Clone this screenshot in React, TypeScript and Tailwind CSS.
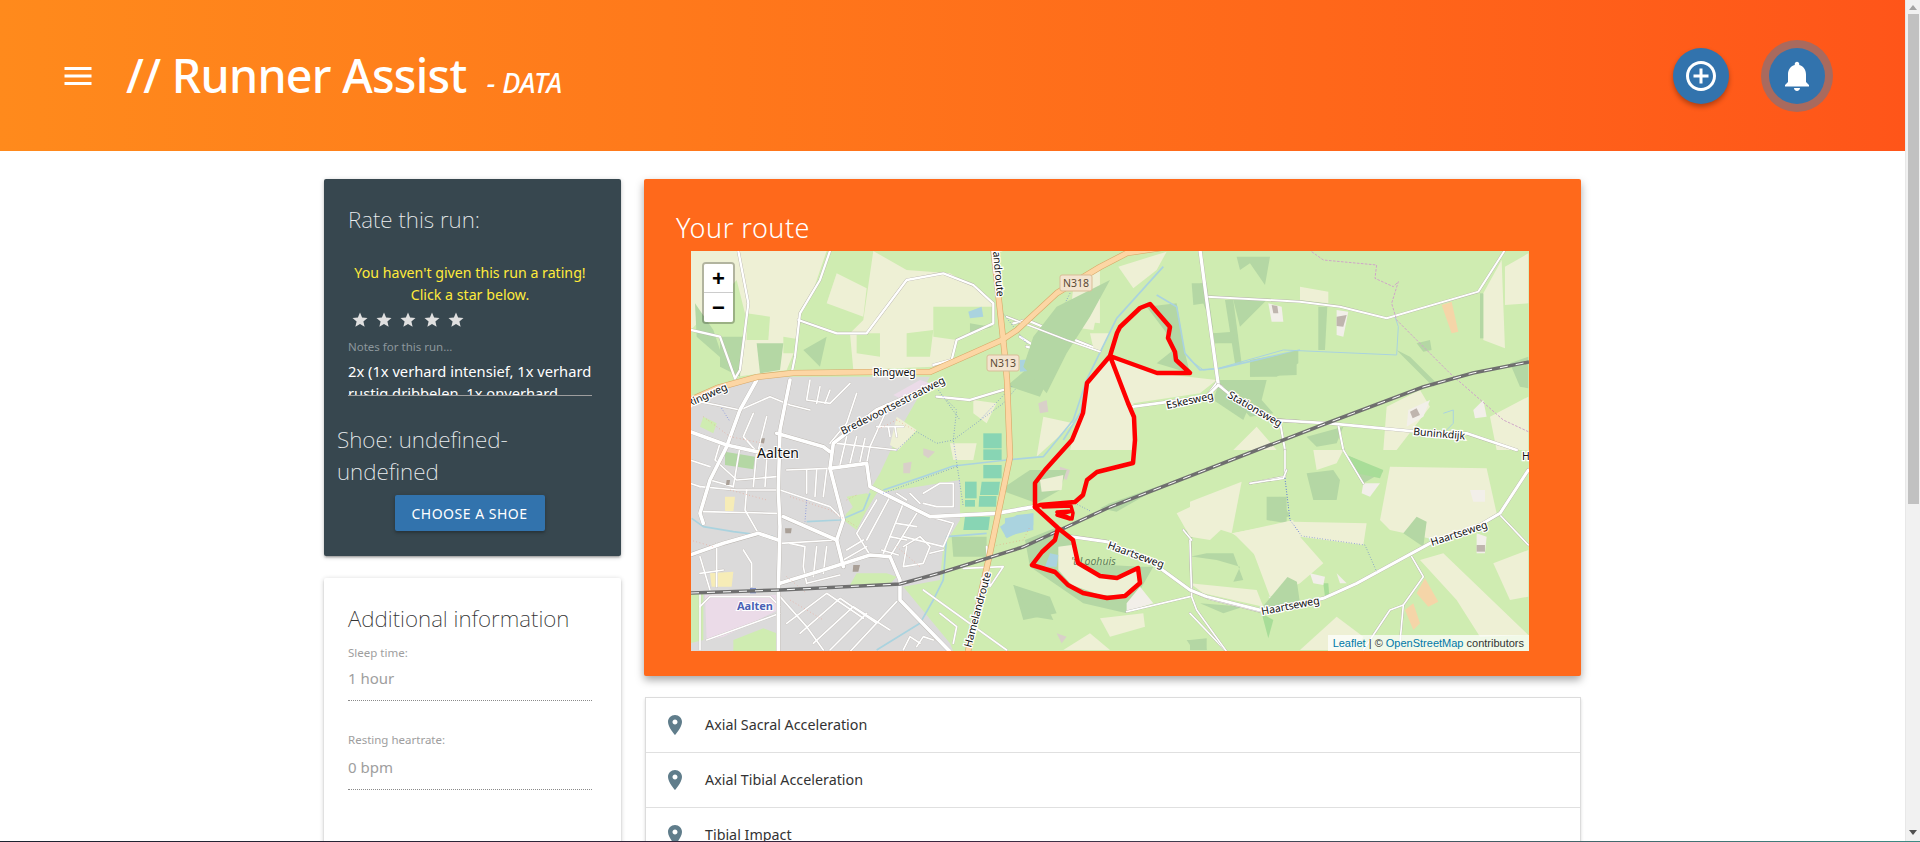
import React from 'react';

const MENU = 'M3 18h18v-2H3v2zm0-5h18v-2H3v2zm0-7v2h18V6H3z';
const ADD =
  'M13 7h-2v4H7v2h4v4h2v-4h4v-2h-4V7zm-1-5C6.48 2 2 6.48 2 12s4.48 10 10 10 10-4.48 10-10S17.52 2 12 2zm0 18c-4.41 0-8-3.59-8-8s3.59-8 8-8 8 3.59 8 8-3.59 8-8 8z';
const BELL =
  'M12 22c1.1 0 2-.9 2-2h-4c0 1.1.89 2 2 2zm6-6v-5c0-3.07-1.64-5.64-4.5-6.32V4c0-.83-.67-1.5-1.5-1.5s-1.5.67-1.5 1.5v.68C7.63 5.36 6 7.92 6 11v5l-2 2v1h16v-1l-2-2z';
const STAR = 'M12 17.27L18.18 21l-1.64-7.03L22 9.24l-7.19-.61L12 2 9.19 8.63 2 9.24l5.46 4.73L5.82 21z';
const PIN =
  'M12 2C8.13 2 5 5.13 5 9c0 5.25 7 13 7 13s7-7.75 7-13c0-3.87-3.13-7-7-7zm0 9.5c-1.38 0-2.5-1.12-2.5-2.5s1.12-2.5 2.5-2.5 2.5 1.12 2.5 2.5-1.12 2.5-2.5 2.5z';

const WOOD = '#b4d7a4';
const RAIL = '0,342 89,339 209,333 249,322 332,296 419,256 566,199 639,171 732,136 782,122 838,111';

const Icon: React.FC<{ d: string; className: string }> = ({ d, className }) => (
  <svg viewBox="0 0 24 24" fill="currentColor" className={className}>
    <path d={d} />
  </svg>
);

const Roads: React.FC<{ lines: string[]; w: number; casing?: string; fill?: string; edge?: number }> = ({
  lines,
  w,
  casing = '#b5b0aa',
  fill = '#ffffff',
  edge = 2,
}) => (
  <g fill="none" strokeLinejoin="round" strokeLinecap="round">
    {lines.map((p, i) => (
      <polyline key={`c${i}`} points={p} stroke={casing} strokeWidth={w + edge} />
    ))}
    {lines.map((p, i) => (
      <polyline key={`f${i}`} points={p} stroke={fill} strokeWidth={w} />
    ))}
  </g>
);

const Polys: React.FC<{ fill: string; items: string[] }> = ({ fill, items }) => (
  <g fill={fill}>
    {items.map((p, i) => (
      <polygon key={i} points={p} />
    ))}
  </g>
);

const Lines: React.FC<{ lines: string[]; stroke: string; w: number; dash?: string }> = ({ lines, stroke, w, dash }) => (
  <g fill="none" stroke={stroke} strokeWidth={w} strokeDasharray={dash} strokeLinejoin="round">
    {lines.map((p, i) => (
      <polyline key={i} points={p} />
    ))}
  </g>
);

const Label: React.FC<{ x: number; y: number; r?: number; anchor?: 'start' | 'middle' | 'end'; children: string }> = ({
  x,
  y,
  r = 0,
  anchor = 'start',
  children,
}) => (
  <text
    x={x}
    y={y}
    transform={`rotate(${r} ${x} ${y})`}
    textAnchor={anchor}
    fontSize="10.5"
    fontFamily="'Noto Sans', sans-serif"
    fill="#111"
    stroke="#fff"
    strokeWidth="2.5"
    paintOrder="stroke"
  >
    {children}
  </text>
);

const Shield: React.FC<{ x: number; y: number; children: string }> = ({ x, y, children }) => (
  <g>
    <rect x={x - 16} y={y - 8} width="32" height="16" rx="2" fill="#f3e4cf" stroke="#d9bd97" />
    <text x={x} y={y + 4} textAnchor="middle" fontSize="10.5" fontFamily="'Noto Sans', sans-serif" fill="#5b4a36">
      {children}
    </text>
  </g>
);

const townMajor = [
  '0,155 110,195 200,215 260,225',
  '300,0 270,150 265,330 270,440 265,640 265,815',
  '720,20 560,90 430,190 420,265 460,420 440,480 460,560',
  '260,160 400,200 420,215',
  '420,265 530,250 540,320 720,410 920,400 1035,380',
  '0,525 100,490 205,460 265,480',
  '270,610 400,570 540,525 600,530 630,600 630,660 780,815',
  '40,430 30,400 60,300 110,200 150,90 200,0',
  '280,410 440,480',
];

const townMinor = [
  '360,0 350,60 420,70 480,10',
  '390,20 380,70',
  '420,30 405,70',
  '150,90 240,50 300,75 360,90',
  '0,60 80,75 150,90',
  '190,100 160,170 200,215',
  '230,110 205,210',
  '500,40 470,130 420,190',
  '590,90 540,200 530,250',
  '500,170 480,250',
  '470,170 450,255',
  '525,175 510,245',
  '560,140 640,140',
  '595,140 600,170',
  '615,140 620,170',
  '440,190 620,210',
  '350,270 350,340',
  '380,270 375,350',
  '410,270 400,350',
  '290,270 420,265',
  '270,330 420,380 450,410',
  '30,320 140,330 260,330',
  '170,330 165,390 205,460',
  '40,395 260,400',
  '130,320 150,200',
  '0,310 30,320',
  '90,190 75,240 140,300 260,290',
  '60,300 130,320',
  '200,215 190,320',
  '230,240 225,320',
  '0,240 60,260',
  '560,360 500,460 540,525',
  '600,350 530,480',
  '640,370 580,520',
  '680,400 600,530',
  '620,430 680,440',
  '600,470 650,480',
  '575,510 625,525',
  '720,410 790,430 760,500 640,470',
  '700,340 750,310 790,310 790,380 740,380 700,370',
  '640,500 690,470 720,500 700,550 640,560 650,500',
  '720,520 760,510',
  '660,340 690,370',
  '620,340 650,360',
  '300,490 345,500 340,560 350,610',
  '270,490 440,480',
  '350,610 450,585',
  '380,500 370,590',
  '410,500 400,580',
  '470,510 520,480',
  '460,540 530,500',
  '80,490 80,620',
  '160,510 185,550 185,620',
  '30,530 60,630',
  '100,570 30,580',
  '290,730 410,640 520,715',
  '330,760 450,655 560,730',
  '370,790 490,680 600,750',
  '420,810 530,700',
  '480,815 620,665',
  '270,650 350,740 400,810',
  '630,660 740,780',
  '700,630 950,810',
  '680,800 700,770 730,780',
  '640,810 660,770 690,790',
  '750,700 800,740 790,790',
  '30,680 60,650 240,650 270,680',
  '50,780 270,700',
  '30,640 30,810',
  '890,500 900,620 940,560 820,565',
];

const App: React.FC = () => {
  return (
    <div className="h-screen overflow-hidden flex flex-col bg-white font-['Noto_Sans',sans-serif]">
      <div className="flex flex-1 min-h-0">
        <div className="flex-1 min-w-0 overflow-hidden">
          <header className="h-[151px] flex items-center pl-[60px] pr-20 text-white bg-linear-to-r from-[#ff8a1c] to-[#ff5519]">
            <Icon d={MENU} className="w-9 h-9" />
            <h1 className="ml-[30px] flex items-baseline">
              <span className="text-[46.5px] font-medium leading-none tracking-[-0.7px]">// Runner Assist</span>
              <span className="ml-[20px] text-[27px] font-medium italic leading-none">- DATA</span>
            </h1>
            <div className="ml-auto flex items-center gap-10">
              <button className="w-14 h-14 rounded-full bg-[#3273ad] flex items-center justify-center shadow-[0_3px_5px_rgba(0,0,0,0.3)]">
                <Icon d={ADD} className="w-9 h-9" />
              </button>
              <button className="w-14 h-14 rounded-full bg-[#3273ad] flex items-center justify-center shadow-[0_0_0_8px_#a96a5e]">
                <Icon d={BELL} className="w-9 h-9" />
              </button>
            </div>
          </header>

          <main className="w-[1257px] mx-auto pt-7 flex gap-[23px] items-start">
            <aside className="w-[297px] shrink-0 flex flex-col gap-[22px]">
              <section className="h-[377px] rounded-[2px] bg-[#37474f] text-white shadow-[0_2px_2px_0_rgba(0,0,0,0.14),0_3px_1px_-2px_rgba(0,0,0,0.12),0_1px_5px_0_rgba(0,0,0,0.2)]">
                <div className="pl-6 pr-[29px] pt-[25px]">
                  <h2 className="text-[22.5px] font-extralight leading-8 text-[#eceff1]">Rate this run:</h2>
                  <p className="mt-[26px] text-center text-[14.2px] leading-[22px] text-[#ffeb3b] whitespace-nowrap">
                    You haven't given this run a rating!
                    <br />
                    Click a star below.
                  </p>
                  <div className="mt-[5px] ml-[3px] flex gap-[6px]">
                    {[0, 1, 2, 3, 4].map((i) => (
                      <Icon key={i} d={STAR} className="w-[18px] h-[18px] text-[#e0e0e0]" />
                    ))}
                  </div>
                  <label className="block mt-[10px] text-[11.5px] leading-4 text-[#8d979c]">Notes for this run...</label>
                  <div className="mt-[5px] h-[36px] overflow-hidden border-b border-[#9e9e9e] text-[14.7px] leading-[22px] whitespace-nowrap">
                    2x (1x verhard intensief, 1x verhard
                    <br />
                    rustig dribbelen, 1x onverhard
                  </div>
                </div>
                <div className="pl-[13px] pr-6 mt-[28px]">
                  <h3 className="text-[22.5px] font-extralight leading-8 text-[#eceff1]">Shoe: undefined-undefined</h3>
                  <div className="mt-[7px] flex justify-center pl-[5px]">
                    <button className="w-[150px] h-9 rounded-[2px] bg-[#3273ad] text-[14px] tracking-[0.5px] uppercase text-white shadow-[0_2px_2px_0_rgba(0,0,0,0.14),0_1px_5px_0_rgba(0,0,0,0.2)]">
                      Choose a shoe
                    </button>
                  </div>
                </div>
              </section>

              <section className="h-[340px] rounded-[2px] bg-white pl-6 pr-[29px] pt-[25px] shadow-[0_2px_2px_0_rgba(0,0,0,0.14),0_3px_1px_-2px_rgba(0,0,0,0.12),0_1px_5px_0_rgba(0,0,0,0.2)]">
                <h2 className="text-[22.5px] font-extralight leading-8 text-[#333] whitespace-nowrap">Additional information</h2>
                <div className="mt-[10px] text-[11.5px] leading-4 text-[#9e9e9e]">Sleep time:</div>
                <div className="mt-[6px] pb-[11px] text-[15px] leading-[22px] text-[#9e9e9e] border-b border-dotted border-[#8a8a8a]">
                  1 hour
                </div>
                <div className="mt-[31px] text-[11.5px] leading-4 text-[#9e9e9e]">Resting heartrate:</div>
                <div className="mt-2 pb-[11px] text-[15px] leading-[22px] text-[#9e9e9e] border-b border-dotted border-[#8a8a8a]">
                  0 bpm
                </div>
              </section>
            </aside>

            <div className="w-[937px] shrink-0 flex flex-col gap-[21px]">
              <section className="h-[497px] rounded-[2px] bg-[#ff691b] shadow-[0_4px_8px_rgba(0,0,0,0.35)]">
                <h2 className="pl-8 pt-[31px] h-[72px] text-[27px] font-light leading-[36px] text-white tracking-[0.5px]">Your route</h2>
                <div className="relative ml-[47px] w-[838px] h-[400px] overflow-hidden">
                  <RouteMap />
                  <div className="absolute left-[11px] top-[11px] w-[33px] rounded-[4px] border-2 border-black/25 bg-clip-padding">
                    <div className="h-[29px] bg-white rounded-t-[2px] border-b border-[#ccc] flex items-center justify-center font-['Liberation_Sans',sans-serif] font-bold text-[22px] text-black">
                      +
                    </div>
                    <div className="h-[29px] bg-white rounded-b-[2px] flex items-center justify-center font-['Liberation_Sans',sans-serif] font-bold text-[22px] text-black">
                      −
                    </div>
                  </div>
                  <div className="absolute right-0 bottom-0 h-4 px-[5px] bg-white/70 font-['Liberation_Sans',sans-serif] text-[11px] leading-4 text-[#333]">
                    <span className="text-[#0078a8]">Leaflet</span> | © <span className="text-[#0078a8]">OpenStreetMap</span>{' '}
                    contributors
                  </div>
                </div>
              </section>

              <ul className="ml-px border border-[#dcdcdc] shadow-[0_2px_3px_rgba(0,0,0,0.15)]">
                {['Axial Sacral Acceleration', 'Axial Tibial Acceleration', 'Tibial Impact'].map((name) => (
                  <li key={name} className="h-[55px] flex items-center pl-[17px] border-b border-[#e0e0e0] text-[14.3px] text-[#333]">
                    <Icon d={PIN} className="w-6 h-6 text-[#607d8b]" />
                    <span className="ml-[18px]">{name}</span>
                  </li>
                ))}
              </ul>
            </div>
          </main>
        </div>

        <div className="w-[15px] shrink-0 bg-[#f1f1f1] border-l border-[#e8e8e8] flex flex-col items-center relative">
          <div className="mt-[5px] w-0 h-0 border-x-[4px] border-x-transparent border-b-[5px] border-b-[#a3a3a3]" />
          <div className="mt-1 w-[11px] h-[490px] bg-[#c1c1c1]" />
          <div className="absolute bottom-[6px] w-0 h-0 border-x-[4px] border-x-transparent border-t-[5px] border-t-[#505050]" />
        </div>
      </div>
      <div className="h-px shrink-0 bg-linear-to-r from-[#1c2230] via-[#3a2740] to-[#3d8a84]" />
    </div>
  );
};

// hand traced base map, each group in the pixel space of one traced crop
const RouteMap: React.FC = () => (
  <svg viewBox="0 0 838 400" className="block w-[838px] h-[400px]">
    <rect width="838" height="400" fill="#cfecb1" />

    {/* town */}
    <g transform="translate(-1,129) scale(0.3333)">
      <Polys
        fill="#dbdada"
        items={['0,70 70,30 200,-10 720,-10 640,130 570,280 540,330 500,440 560,340 810,300 810,420 760,500 750,600 640,620 780,790 790,815 0,815']}
      />
      <Polys fill="#cfecb1" items={['470,400 530,340 550,350 500,450 460,420', '0,640 40,640 40,780 0,790', '130,780 220,745 260,760 260,815 130,815', '590,580 620,590 600,612 480,615 500,580', '40,110 80,130 70,160 30,140', '470,350 530,340 500,400']} />
      <Polys fill="#ebdbe8" items={['45,645 260,645 265,690 100,770 50,780', '610,45 690,0 720,10 640,60']} />
      <Polys fill={WOOD} items={['105,215 195,230 190,268 105,255', '970,615 1080,650 1100,700 1000,720', '785,470 890,470 890,530 790,530']} />
      <Polys fill="#f6ecb7" items={['60,580 130,575 125,620 65,620', '105,350 135,350 130,395 105,395']} />
      <Polys fill="#eef0d5" items={['850,60 920,70 890,130 850,100', '620,110 680,150 625,210 600,195', '780,190 860,190 850,240 790,240', '1060,110 1150,130 1040,230']} />
      <Polys fill="#88d5b4" items={['880,160 935,160 935,205 880,205', '880,208 935,208 935,240 880,240', '880,255 935,255 935,295 880,295', '875,305 930,305 925,345 870,345', '868,348 920,348 918,380 866,380', '825,305 860,305 860,355 825,355', '825,360 855,360 855,380 825,380', '825,410 900,410 895,450 820,450']} />
      <Polys fill="#aad3df" items={['945,415 1030,400 1030,450 945,470', '1065,560 1090,520 1105,545 1080,570']} />
      <Lines
        stroke="#aad3df"
        w={5}
        lines={[
          '580,330 700,290 790,258 950,240 1060,230 1150,120 1190,0',
          '5,415 40,440 130,455 250,470',
          '350,425 450,420 520,390 540,340',
          '760,600 770,470 890,460',
          '760,600 730,660 690,730 560,810',
        ]}
      />
      <Roads w={5} casing="#c4bfba" lines={townMinor} />
      <Roads w={11} lines={townMajor} />
      <Lines stroke="#f0907a" w={2} dash="2 8" lines={['620,120 680,155', '40,110 120,170 220,190', '300,350 420,390 500,440', '470,360 500,345', '0,480 70,500', '290,590 350,640', '620,500 690,560', '620,120 560,150', '900,500 1000,480 1030,420', '120,330 230,360', '300,660 400,720']} />
      <Lines stroke="#3a55e0" w={2} dash="2 6" lines={['620,210 680,155 740,190 790,180 940,70 1000,0', '770,60 800,90 790,180 820,380', '580,340 800,260', '350,360 345,425', '95,85 120,125']} />
      <Polys fill="#d9d0c9" items={['700,205 735,215 715,235 700,225', '640,250 665,245 660,280 640,280', '1045,70 1070,60 1075,95 1050,100', '1110,260 1140,270 1130,300 1110,290', '1100,760 1130,770 1115,790']} />
      <Polys fill="#a99f96" items={['215,175 225,175 222,190 212,188', '110,300 120,300 118,315 108,315', '490,555 510,555 505,575 488,575', '285,445 305,445 303,460 286,460']} />
      <rect x="180" y="624" width="18" height="16" fill="#7f8fc9" />
    </g>

    {/* north west */}
    <g transform="translate(-51,-81) scale(0.3333)">
      <Polys
        fill="#eef0d5"
        items={[
          '153,243 560,243 520,360 480,420 465,540 440,600 290,620 320,450 290,330 153,480',
          '700,243 800,300 930,310 1000,350 1060,400 1060,470 950,510 930,570 880,590 640,600 630,490 670,450',
          '590,310 680,355 670,440 560,400',
          '1300,350 1380,300 1380,460 1290,450',
        ]}
      />
      <Polys
        fill="#cfecb1"
        items={[
          '320,430 390,440 385,510 320,510',
          '650,490 720,490 720,560 650,550',
          '800,490 880,480 870,560 800,560',
          '430,500 490,510 470,550 430,550',
          '880,410 1060,410 1060,470 950,510 880,500',
        ]}
      />
      <Polys
        fill={WOOD}
        items={[
          '240,500 310,500 300,620 240,590',
          '165,400 220,480 250,570 170,500',
          '350,520 430,520 420,600 360,610',
          '490,540 560,500 540,590',
          '1110,640 1180,580 1290,450 1270,530 1200,680 1110,650',
          '990,460 1020,465 1060,470 990,490',
        ]}
      />
      <Polys fill="#aad3df" items={['985,425 1025,410 1030,440 990,445', '1140,570 1220,565 1200,600 1140,605']} />
      <Roads
        w={7}
        lines={[
          '295,243 325,400 300,600 285,625',
          '570,243 540,330 480,430 465,560 455,610',
          '475,450 590,490 680,490 800,330 910,310 1000,345 1060,400 1060,460 950,510 935,570 880,585',
          '153,480 240,500 285,625',
          '1120,460 1160,450 1280,500 1380,540',
          '1140,500 1210,545 1160,530',
          '890,680 990,690 1090,660',
        ]}
      />
      <Lines stroke="#3a55e0" w={2} dash="2 6" lines={['1085,425 1160,520', '1290,370 1250,450', '1115,650 1020,750', '895,660 960,750']} />
    </g>

    {/* route area north */}
    <g transform="translate(309,-11) scale(0.3333)">
      <Polys fill="#eef0d5" items={['330,350 470,400 650,420 600,460 400,490 405,630 210,630 260,430', '355,80 500,35 470,90 400,145', '240,220 300,180 280,270 210,260', '270,280 330,280 300,335 280,325']} />
      <Polys fill={WOOD} items={['440,200 530,190 555,340 570,400 470,370 520,330 500,280', '700,180 800,180 720,260', '600,130 620,130 640,270 610,190', '680,180 700,180 725,370 710,370', '640,280 700,280 700,310 645,310', '750,360 890,335 890,405 750,410', '660,420 780,420 760,470 730,540 640,480', '70,380 140,460 200,340 270,230 330,120 170,200 100,290']} />
      <Lines stroke="#aad3df" w={5} lines={['490,80 350,235 260,420 240,520 190,600', '470,165 530,200 555,340 600,390 660,385 900,330']} />
      <Roads w={8} lines={['400,500 620,470 650,430', '650,430 720,480 830,540 900,545']} />
      <Roads w={5} lines={['20,230 200,300 300,335']} />
    </g>

    {/* east */}
    <g transform="translate(499,-1) scale(0.3333)">
      <Polys
        fill="#eef0d5"
        items={[
          '880,130 935,30 945,295 880,270',
          '945,50 1015,10 1015,160 945,165',
          '330,110 415,125 415,160 330,150',
          '580,600 590,470 690,420 720,470 620,600',
          '900,500 1015,440 1015,600 920,600',
          '130,600 200,530 260,600',
        ]}
      />
      <Polys
        fill={WOOD}
        items={[
          '180,340 325,300 325,340 260,380 180,380',
          '100,390 230,390 215,450 250,490 180,500 100,410',
          '105,150 120,150 150,340 135,340',
          '385,170 412,170 405,300 385,300',
          '960,340 1015,320 1015,415 990,410',
          '870,130 880,130 880,265 870,265',
          '140,20 240,20 225,105 180,40 150,60',
          '350,560 460,530 440,580 380,590',
          '680,280 720,270 725,300 700,305',
          '5,100 40,100 45,160 10,165',
          '70,250 130,245 135,275 75,280',
          '620,300 660,320 740,400 730,410 640,320',
        ]}
      />
      <Lines
        stroke="#aad3df"
        w={3}
        lines={['0,330 40,360 85,355 280,300 620,315 625,230 615,200', '760,490 790,480 790,520 770,540']}
      />
      <Polys fill="#f5d5a8" items={['755,165 785,155 805,245 785,250']} />
      <Polys fill="#f2efe9" items={['235,160 275,170 280,215 245,215', '440,180 475,185 460,260 440,255', '655,480 720,450 700,500 650,530', '850,480 880,450 890,500 855,505']} />
      <Polys fill="#bfb5ae" items={['245,165 262,168 265,190 250,190', '440,200 470,195 460,230 440,228', '660,485 680,475 690,495 668,505']} />
      <Roads
        w={6}
        lines={['50,140 330,155 450,170 590,205 865,125 945,0', '270,515 285,600', '445,525 460,600']}
      />
      <Roads w={10} lines={['30,0 50,150 85,405']} />
      <Roads w={8} lines={['85,405 140,450 250,510 420,520 680,545 830,550 980,600', '85,405 50,440 0,455']} />
      <Lines stroke="#cfa6c8" w={3} dash="8 4" lines={['365,5 400,30 560,45 555,85 610,110 625,95 605,160 620,210 780,370 940,510 1015,545']} />
    </g>

    {/* south east */}
    <g transform="translate(499,199) scale(0.3333)">
      <Polys
        fill="#eef0d5"
        items={[
          '0,155 155,95 125,250 0,210',
          '125,250 310,215 530,220 520,285 330,260 400,340 330,400 240,440 180,280',
          '570,210 600,50 890,55 920,190 850,235 740,270 600,240',
          '690,330 800,450 870,560 1015,555 760,310',
          '1015,300 910,340 960,450 1015,440',
          '370,0 460,0 440,40 380,60',
          '0,400 200,420 220,470 40,430',
          '330,600 440,500 520,560 500,600',
        ]}
      />
      <Polys
        fill={WOOD}
        items={[
          '350,70 430,60 450,90 440,150 370,150',
          '230,205 270,140 300,200',
          '640,250 680,200 710,215 700,290',
          '470,15 580,65 520,100',
          '0,570 50,565 50,600 0,600',
          '30,460 160,470 100,490',
          '0,320 50,310 130,310 160,390 130,395 150,350 80,330 10,320',
        ]}
      />
      <Polys fill="#a8dd98" items={['470,15 580,60 570,85 500,70', '400,400 415,400 418,440 405,440', '215,490 250,510 235,565']} />
      <Polys fill="#f5d5a8" items={['680,430 705,385 745,455 715,470', '645,480 670,460 690,520 670,540']} />
      <Polys fill="#f2efe9" items={['520,100 570,100 540,140 515,130', '360,370 405,380 400,405 370,400', '440,370 470,400 450,400', '860,250 890,260 885,310 860,310', '235,440 280,440 270,480', '840,120 885,120 885,155 850,155']} />
      <Polys fill="#bfb5ae" items={['860,285 885,285 885,305 860,305']} />
      <Roads w={5} lines={['285,0 285,80 180,100', '460,0 520,100', '0,270 5,410', '665,320 700,380 640,465 600,480 520,600', '640,465 628,600', '930,195 1015,285', '0,490 105,600']} />
      <Roads w={9} lines={['0,420 60,445 220,485 400,445 500,400 720,280 870,225 930,190 1015,60']} />
      <Lines stroke="#3a55e0" w={2} dash="2 6" lines={['285,85 300,210 335,258 525,285 560,365']} />
    </g>

    {/* south of the route */}
    <g transform="translate(309,219) scale(0.3333)">
      <Polys fill={WOOD} items={['75,210 175,170 215,195 240,280 420,290 460,290 380,430 250,400 90,290', '0,60 90,0 200,0 180,60 110,100', '330,100 500,40 350,125 300,115', '40,345 130,385 160,450 100,440', '780,420 880,300 890,330 900,400 800,430', '800,80 860,80 860,160 800,150', '555,180 590,190 570,210', '560,510 610,510 620,540 580,540']} />
      <Polys fill="#eef0d5" items={['175,230 215,225 240,290 300,320 350,330 410,300 415,345 370,375 300,375 215,345 175,300', '530,130 720,40 695,150 630,210 570,200', '700,190 880,150 900,340 800,290', '120,30 190,15 185,60 125,65', '300,445 430,430 435,470 330,500', '190,540 270,490 330,540']} />
      <Polys fill="#aad3df" items={['135,290 150,250 175,255 170,290', '0,170 50,135 100,130 100,165 20,205']} />
      <Polys fill="#f2efe9" items={['380,400 420,350 460,400 380,425']} />
      <Roads w={5} lines={['380,425 570,380', '570,210 575,380 590,420 680,545', '575,210 550,180', '750,40 850,25 860,0']} />
      <Roads w={9} lines={['215,200 320,215 460,280 570,360 620,380 780,420 900,400']} />
      <Lines stroke="#3a55e0" w={2} dash="2 6" lines={['225,100 275,125', '855,25 870,150 900,190']} />
    </g>

    {/* primary roads */}
    <Roads
      w={5}
      edge={1.2}
      casing="#d9a868"
      fill="#fcd6a4"
      lines={[
        '302,-5 309,59 314,106 316,129 319,206 299,302 276,405',
        '-5,151 26,137 66,126 102,122 182,121 239,121 282,102 311,89 326,79 366,42 409,16 436,2 470,-3 560,-3',
      ]}
    />

    {/* railway */}
    <polyline points={RAIL} fill="none" stroke="#6f6f6f" strokeWidth="3.5" />
    <polyline points={RAIL} fill="none" stroke="#fff" strokeWidth="1" strokeDasharray="8 8" />

    {/* labels */}
    <text x="66" y="207" fontSize="14" fontFamily="'Noto Sans', sans-serif" fill="#111" stroke="#fff" strokeWidth="2" paintOrder="stroke">
      Aalten
    </text>
    <text x="46" y="359" fontSize="11" fontWeight="700" fontFamily="'Noto Sans', sans-serif" fill="#4a5fb5" stroke="#fff" strokeWidth="2" paintOrder="stroke">
      Aalten
    </text>
    <Label x={182} y={125}>Ringweg</Label>
    <Label x={-2} y={156} r={-24}>Ringweg</Label>
    <Label x={306} y={46} r={85} anchor="end">Hamelandroute</Label>
    <Label x={280} y={397} r={-75}>Hamelandroute</Label>
    <Label x={152} y={184} r={-27}>Bredevoortsestraatweg</Label>
    <Label x={476} y={158} r={-12}>Eskesweg</Label>
    <Label x={536} y={146} r={30}>Stationsweg</Label>
    <Label x={722} y={184} r={5}>Buninkdijk</Label>
    <Label x={416} y={297} r={20}>Haartseweg</Label>
    <Label x={571} y={364} r={-11}>Haartseweg</Label>
    <Label x={741} y={295} r={-18}>Haartseweg</Label>
    <Label x={831} y={209}>H</Label>
    <text x="380" y="314" fontSize="10.5" fontStyle="italic" fontFamily="'Noto Sans', sans-serif" fill="#5f7f5f">
      't Loohuis
    </text>
    <Shield x={385} y={32}>N318</Shield>
    <Shield x={312} y={112}>N313</Shield>

    {/* the run */}
    <g fill="none" stroke="#ff0000" strokeWidth="4.5" strokeLinejoin="round" strokeLinecap="round">
      <polyline points="344,256 344,232 354,219 381,189 392,162 396,132 419,105 426,82 429,76 449,57 459,53 479,76 477,87 484,101 485,109 499,122 466,122 419,105 437,152 443,166 444,189 442,212 406,221 396,229 392,244 384,251 349,254 344,256" />
      <polyline points="344,256 367,277 382,289 387,312 409,325 426,327 447,317 449,332 434,345 416,347 392,342 377,334 364,321 341,314 351,301 364,289 367,277" />
      <polyline points="352,256 380,255 382,262 381,268 366,261 381,260 366,264 379,268" strokeWidth="3.5" />
    </g>
  </svg>
);

export default App;
